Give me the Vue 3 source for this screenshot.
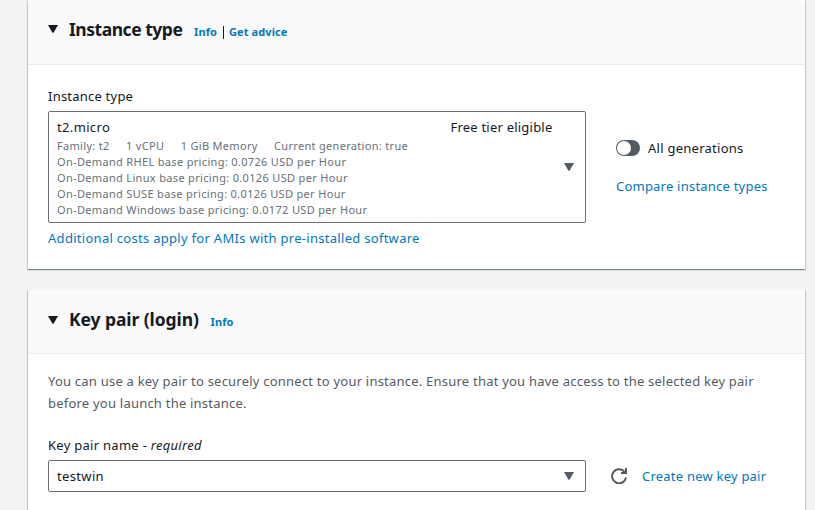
<script setup>
const specs = ['Family: t2', '1 vCPU', '1 GiB Memory', 'Current generation: true']
const prices = [
  { os: 'RHEL', price: '0.0726' },
  { os: 'Linux', price: '0.0126' },
  { os: 'SUSE', price: '0.0126' },
  { os: 'Windows', price: '0.0172' },
]
</script>

<template>
  <main class="page">
    <section class="panel panel-instance">
      <header class="head">
        <svg class="caret" viewBox="0 0 10 8"><path d="M0 0H10L5.8 7.2Q5 8.4 4.2 7.2Z" /></svg>
        <h2 class="title title-instance">Instance type</h2>
        <a class="info">Info</a>
        <span class="divider"></span>
        <a class="info advice">Get advice</a>
      </header>
      <div class="body">
        <label class="label l-instance">Instance type</label>
        <div class="row">
          <div class="select tall">
            <div class="option">
              <div class="option-top">
                <span class="t-micro">t2.micro</span>
                <span class="t-free">Free tier eligible</span>
              </div>
              <div class="meta specs"><span v-for="s in specs" :key="s">{{ s }}</span></div>
              <div v-for="p in prices" :key="p.os" class="meta">
                On-Demand {{ p.os }} base pricing: {{ p.price }} USD per Hour
              </div>
            </div>
            <svg class="caret grey" viewBox="0 0 10 8"><path d="M0 0H10L5.8 7.2Q5 8.4 4.2 7.2Z" /></svg>
          </div>
          <div class="side">
            <div class="toggle-row"><span class="toggle"><i></i></span><span class="t-all">All generations</span></div>
            <a class="link t-compare">Compare instance types</a>
          </div>
        </div>
        <a class="link costs">Additional costs apply for AMIs with pre-installed software</a>
      </div>
    </section>

    <section class="panel panel-key">
      <header class="head">
        <svg class="caret" viewBox="0 0 10 8"><path d="M0 0H10L5.8 7.2Q5 8.4 4.2 7.2Z" /></svg>
        <h2 class="title title-key">Key pair (login)</h2>
        <a class="info">Info</a>
      </header>
      <div class="body">
        <p class="desc">
          <span class="d1">You can use a key pair to securely connect to your instance. Ensure that you have access to the selected key pair</span><br />
          <span class="d2">before you launch the instance.</span>
        </p>
        <label class="label l-key">Key pair name - <em>required</em></label>
        <div class="row">
          <div class="select short">
            <span class="t-test">testwin</span>
            <svg class="caret grey" viewBox="0 0 10 8"><path d="M0 0H10L5.8 7.2Q5 8.4 4.2 7.2Z" /></svg>
          </div>
          <svg class="refresh" viewBox="0 0 16 16">
            <path d="M15 9.4A7 7 0 1 1 13.6 4" />
            <path d="M15 0V5H10" />
          </svg>
          <a class="link t-create">Create new key pair</a>
        </div>
      </div>
    </section>
  </main>
</template>

<style>
body { margin: 0; background: #f2f3f3; overflow: hidden; }
</style>

<style scoped>
.page {
  box-sizing: border-box;
  height: 510px;
  overflow: hidden;
  padding: 0 10px 0 28px;
  background: #f2f3f3;
  color: #16191f;
  font: 13px/22px "Noto Sans", "Open Sans", sans-serif;
  letter-spacing: 0.22px;
  white-space: nowrap;
}
.panel {
  background: #fff;
  box-shadow: 0 1px 1px 0 rgba(0, 28, 36, 0.3), 1px 1px 1px 0 rgba(0, 28, 36, 0.15), -1px 1px 1px 0 rgba(0, 28, 36, 0.15);
}
.panel-instance { height: 269px; margin-bottom: 21px; }
.panel-key { height: 240px; }
.head {
  box-sizing: border-box;
  display: flex;
  height: 65px;
  padding: 18px 20px 0;
  background: #fafafa;
  border-bottom: 1px solid #eaeded;
}
.panel-key .head { height: 64px; }
.caret { flex: none; width: 10px; height: 8px; margin-top: 7px; fill: #16191f; }
.panel-key .head .caret { margin-top: 8px; }
.caret.grey, .panel-key .caret.grey { margin: 0; fill: #545b64; }
.title { margin: 0 0 0 11px; font-size: 17.5px; line-height: 22px; font-weight: 700; }
.title-instance { width: 114px; letter-spacing: -0.47px; }
.title-key { width: 130px; letter-spacing: -0.08px; }
.info { margin: 3px 0 0 11px; font-size: 11px; letter-spacing: 0.1px; font-weight: 700; color: #0077c0; }
.panel-key .info { margin-left: 11.5px; }
.divider { width: 1px; height: 13px; margin: 8px 0 0 6px; background: #16191f; }
.info.advice { margin-left: 5px; }
.body { padding: 20px 20px 0; }
.label { display: block; height: 26px; }
.row { display: flex; }
.select {
  box-sizing: border-box;
  display: flex;
  align-items: center;
  justify-content: space-between;
  width: 538px;
  padding: 0 11px 0 8px;
  border: 1px solid #687078;
  border-radius: 2px;
}
.tall { height: 112px; }
.short { height: 32px; }
.t-test { letter-spacing: 0.35px; }
.option { width: 495.5px; }
.option-top { display: flex; justify-content: space-between; height: 20px; line-height: 22px; margin-top: -3px; }
.t-micro { letter-spacing: 0.35px; }
.meta { height: 16px; font-size: 11px; line-height: 20px; letter-spacing: 0.33px; color: #687078; }
.specs { display: flex; gap: 16.4px; letter-spacing: 0.31px; }
.side { display: flex; flex-direction: column; gap: 16px; margin: 26px 0 0 30px; }
.toggle-row { display: flex; align-items: center; gap: 8px; height: 22px; }
.toggle { width: 24px; height: 16px; border-radius: 8px; background: #545b64; }
.toggle i { display: block; width: 14px; height: 14px; margin: 1px; border-radius: 50%; background: #fff; }
.t-all { letter-spacing: 0.26px; }
.link { color: #0077c0; }
.costs { display: block; margin-top: 4px; letter-spacing: 0.29px; }
.desc { margin: -4px 0 0; color: #545b64; }
.l-key { margin-top: 20px; letter-spacing: 0.28px; }
.refresh { width: 16px; height: 16px; margin: 8px 0 0 25px; fill: none; stroke: #545b64; stroke-width: 2; }
.t-create { margin: 5px 0 0 15px; }
</style>
